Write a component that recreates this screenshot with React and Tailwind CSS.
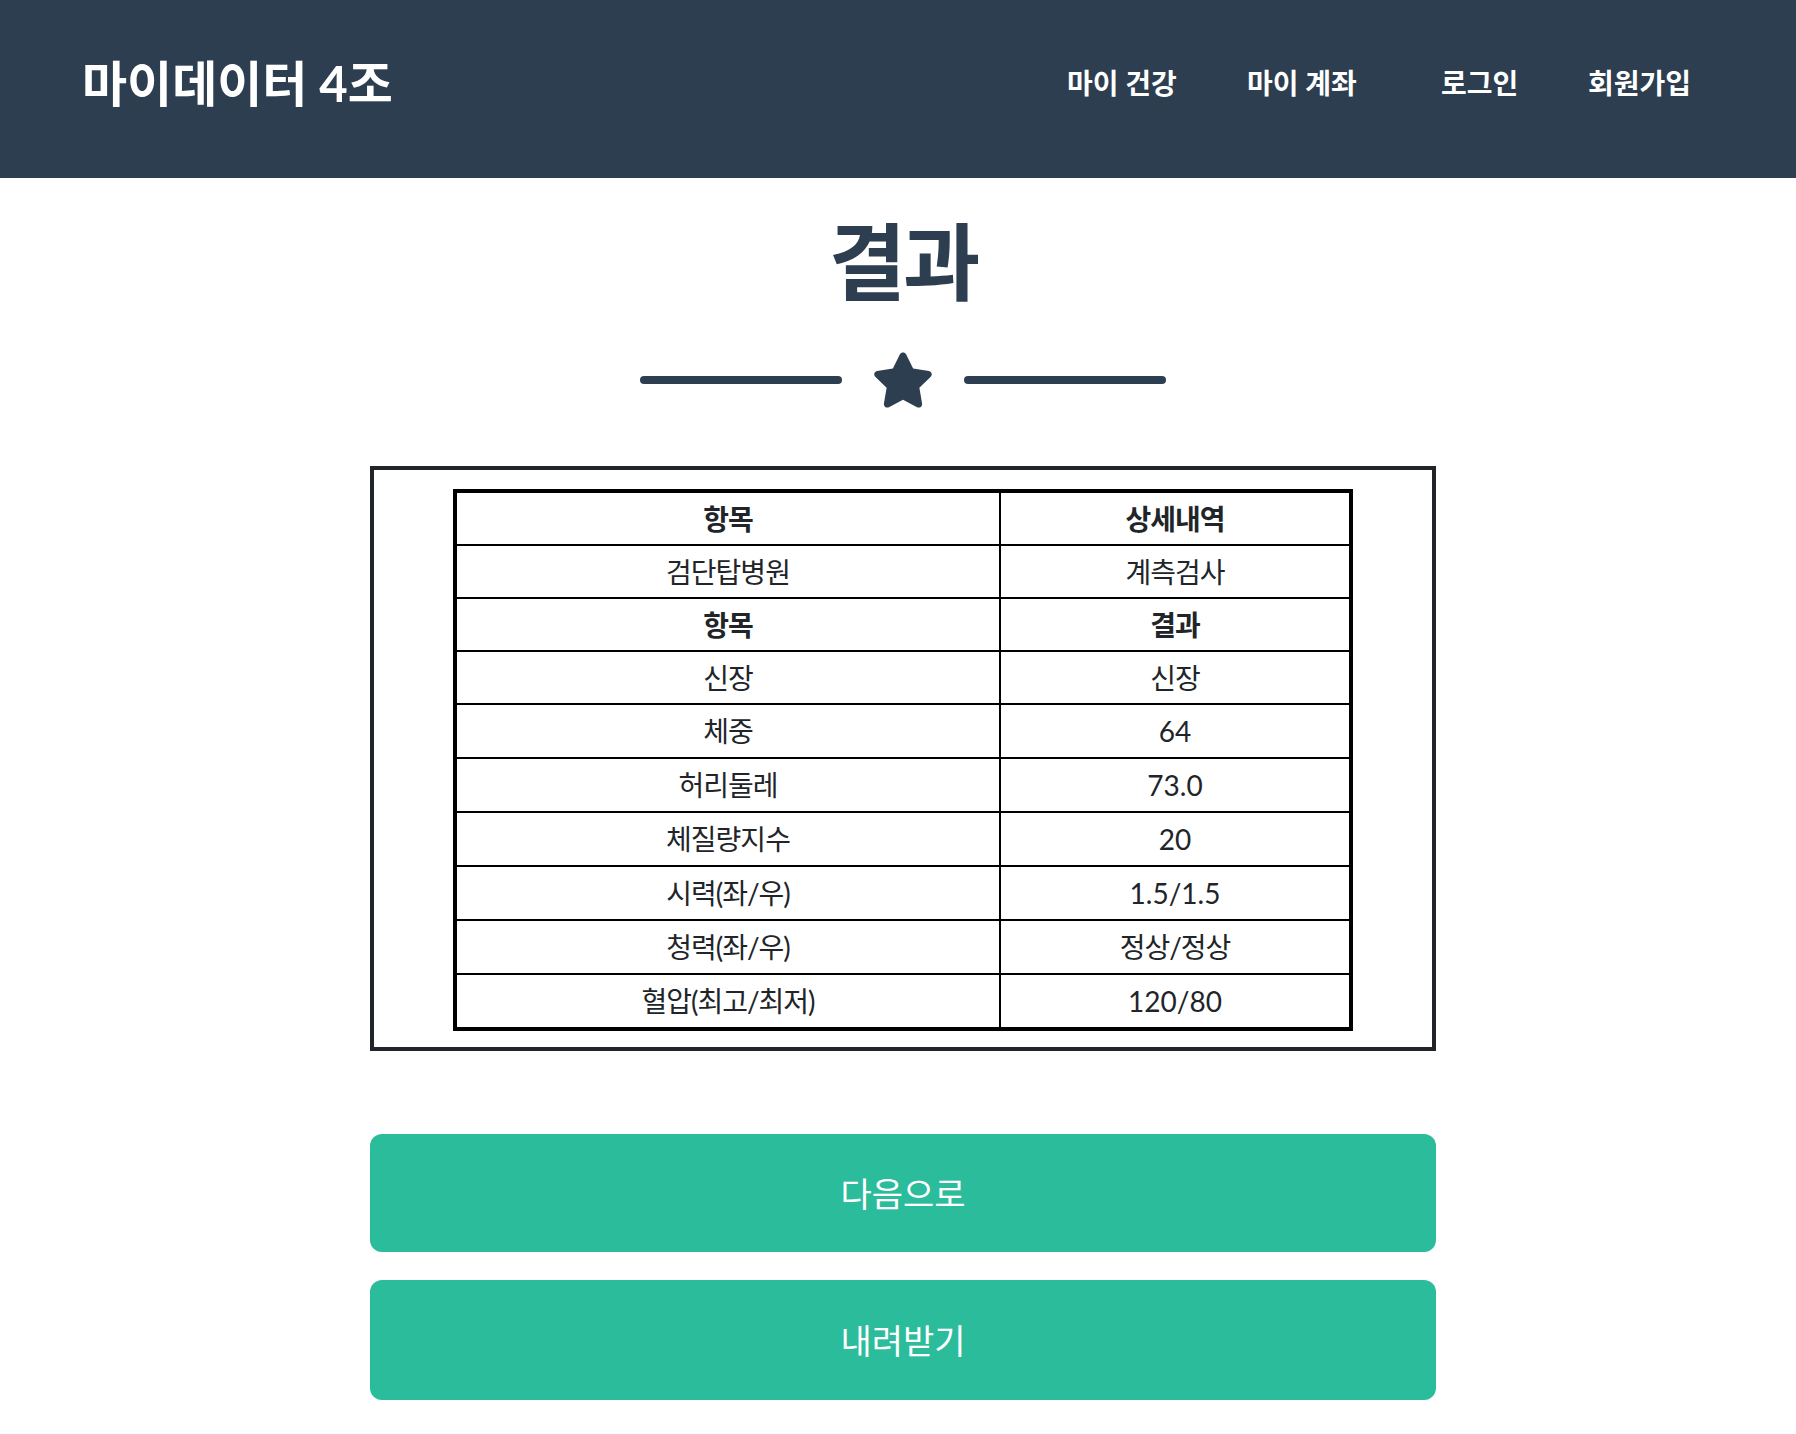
import React from "react";

const rows = [
  ["항목", "상세내역", true],
  ["검단탑병원", "계측검사", false],
  ["항목", "결과", true],
  ["신장", "신장", false],
  ["체중", "64", false],
  ["허리둘레", "73.0", false],
  ["체질량지수", "20", false],
  ["시력(좌/우)", "1.5/1.5", false],
  ["청력(좌/우)", "정상/정상", false],
  ["혈압(최고/최저)", "120/80", false],
];

const hasHangul = (s) => /[\uac00-\ud7a3]/.test(s);

function Cell({ text, bold, right, h }) {
  return (
    <div
      className={
        "flex items-center justify-center text-[28px] text-[#212529] " +
        (bold ? "font-bold " : "font-normal ") +
        (right ? "border-l-2 border-black " : "") +
        (hasHangul(text) ? "tracking-[-1px] " : "") +
        h
      }
    >
      {text}
    </div>
  );
}

export default function App() {
  return (
    <div className="min-h-[1434px] bg-white">
      <div className="font-['Lato','Noto_Sans_CJK_KR',sans-serif]">
        <header className="h-[178px] bg-[#2c3e50] flex items-center justify-between pl-[82px] pr-[105px] pb-[12px]">
          <div className="text-white font-bold text-[49px] leading-none">마이데이터 4조</div>
          <nav className="flex items-center text-white font-bold text-[28px] leading-none">
            <span className="w-[180px]">마이 건강</span>
            <span className="w-[194px]">마이 계좌</span>
            <span className="w-[147px]">로그인</span>
            <span>회원가입</span>
          </nav>
        </header>

        <main className="flex flex-col items-center pl-[10px]">
          <h1 className="mt-[42px] text-[84px] leading-none font-bold text-[#2c3e50] tracking-[-3px]">결과</h1>

          <div className="mt-[47px] h-[58px] flex items-center gap-[30px]">
            <div className="w-[202px] h-[8px] rounded-full bg-[#2c3e50]" />
            <svg viewBox="0 0 576 512" className="w-[62px] h-[56px]" fill="#2c3e50">
              <path d="M259.3 17.8L194 150.2 47.9 171.5c-26.2 3.8-36.7 36.1-17.7 54.6l105.7 103-25 145.5c-4.5 26.3 23.2 46 46.4 33.7L288 439.6l130.7 68.7c23.2 12.2 50.9-7.4 46.4-33.7l-25-145.5 105.7-103c19-18.5 8.5-50.8-17.7-54.6L382 150.2 316.7 17.8c-11.7-23.6-45.6-23.9-57.4 0z" />
            </svg>
            <div className="w-[202px] h-[8px] rounded-full bg-[#2c3e50]" />
          </div>

          <div className="mt-[57px] w-[1066px] border-4 border-[#212529] pt-[19px] pb-[16px]">
            <div className="w-[900px] mx-auto border-4 border-black">
              {rows.map(([a, b, bold], i) => {
                const h = i < 4 ? "h-[51px]" : "h-[52px]";
                return (
                  <div
                    key={i}
                    className={
                      "grid grid-cols-[542px_1fr] " + (i > 0 ? "border-t-2 border-black" : "")
                    }
                  >
                    <Cell text={a} bold={bold} h={h} />
                    <Cell text={b} bold={bold} right h={h} />
                  </div>
                );
              })}
            </div>
          </div>

          <button className="mt-[83px] w-[1066px] h-[118px] rounded-[12px] bg-[#2bbc9c] text-white text-[34px] font-normal flex items-center justify-center">
            다음으로
          </button>
          <button className="mt-[28px] w-[1066px] h-[120px] rounded-[12px] bg-[#2bbc9c] text-white text-[34px] font-normal flex items-center justify-center">
            내려받기
          </button>
        </main>
      </div>
    </div>
  );
}
